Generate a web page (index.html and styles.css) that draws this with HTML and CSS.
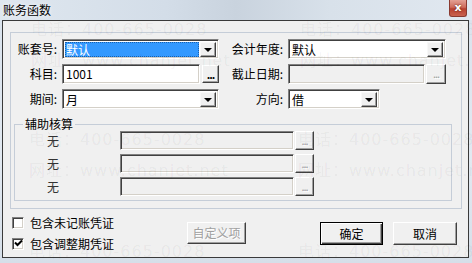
FILE: index.html
```
<!DOCTYPE html>
<html lang="zh-CN">
  <head>
    <meta charset="UTF-8" />
    <title>账务函数</title>
    <link rel="stylesheet" href="styles.css">
  </head>
  <body>
    <div class="window">
      <div class="titlebar">
        <span class="title">账务函数</span>
        <span class="close">x</span>
      </div>
      <div class="client">
        <div class="panel">
          <div class="form">
            <label class="lbl">账套号:</label>
            <div class="combo"><span class="value selected">默认</span><span class="drop"><i></i></span></div>
            <label class="lbl">会计年度:</label>
            <div class="combo"><span class="value">默认</span><span class="drop"><i></i></span></div>

            <label class="lbl">科目:</label>
            <div class="picker">
              <div class="edit">1001</div>
              <span class="btn dots">...</span>
            </div>
            <label class="lbl">截止日期:</label>
            <div class="picker wide">
              <div class="edit off"></div>
              <span class="btn dots off">...</span>
            </div>

            <label class="lbl">期间:</label>
            <div class="combo"><span class="value">月</span><span class="drop"><i></i></span></div>
            <label class="lbl">方向:</label>
            <div class="combo short"><span class="value">借</span><span class="drop"><i></i></span></div>
          </div>

          <fieldset class="aux">
            <legend>辅助核算</legend>
            <div class="aux-row">
              <span class="aux-lbl">无</span>
              <div class="edit off"></div>
              <span class="btn dots off">...</span>
            </div>
            <div class="aux-row">
              <span class="aux-lbl">无</span>
              <div class="edit off"></div>
              <span class="btn dots off">...</span>
            </div>
            <div class="aux-row">
              <span class="aux-lbl">无</span>
              <div class="edit off"></div>
              <span class="btn dots off">...</span>
            </div>
          </fieldset>
        </div>

        <div class="footer">
          <div class="checks">
            <div class="check"><span class="box"></span>包含未记账凭证</div>
            <div class="check">
              <span class="box">
                <svg width="9" height="9" viewBox="0 0 9 9"><path d="M1 3.5 L3.5 6 L8 1.5" fill="none" stroke="#000" stroke-width="2"/></svg>
              </span>包含调整期凭证
            </div>
          </div>
          <span class="btn push off">自定义项</span>
          <span class="btn push default">确定</span>
          <span class="btn push">取消</span>
        </div>
      </div>
    </div>

    <!-- watermark stamped over the screenshot -->
    <div class="watermark">
      <div class="mark m1">电话：400-665-0028<br>网址：www.chanjet.net</div>
      <div class="mark m2">电话：400-665-0028<br>网址：www.chanjet.net</div>
      <div class="mark m3">电话：400-665-0028<br>网址：www.chanjet.net</div>
      <div class="mark m4">电话：400-665-0028<br>网址：www.chanjet.net</div>
      <div class="mark m5">电话：400-665-0028</div>
      <div class="mark m6">电话：400-665-0028</div>
    </div>
  </body>
</html>
```

FILE: styles.css
```
/* Dialog window */
body {
  margin: 0;
  width: 472px;
  height: 263px;
  overflow: hidden;
  position: relative;
  background: #dbe4ee;
  font: 12px "Noto Sans CJK SC", "Liberation Sans", sans-serif;
  color: #000;
}

.window {
  display: flex;
  flex-direction: column;
  height: 263px;
  background: linear-gradient(180deg, #d9e2ec 0%, #e2e9f1 60%, #d6dfe9 100%);
}

.titlebar {
  height: 20px;
  display: flex;
  align-items: flex-start;
  padding: 0 5px 0 3px;
  background: linear-gradient(90deg, #dfe7ef 0%, #d3dde8 35%, #c9d3de 50%, #d8e1ea 70%, #e1e8f0 100%);
}

.title {
  line-height: 19px;
  font-size: 12px;
  text-shadow: 0 0 4px #fff;
}

.close {
  margin-left: auto;
  width: 18px;
  height: 17px;
  box-sizing: border-box;
  border: 1px solid #8a3a30;
  border-top: 0;
  border-radius: 0 0 3px 3px;
  background: linear-gradient(180deg, #e3a094 0%, #cf6c5c 45%, #b8402f 55%, #c9624f 100%);
  color: #fff;
  font: bold 11px "DejaVu Sans", sans-serif;
  text-align: center;
  line-height: 15px;
  text-shadow: 0 0 2px #4a1208;
}

.client {
  margin: 0 3px 0 2px;
  height: 238px;
  box-sizing: border-box;
  border: 1px solid #3a3a3a;
  background: #f0f0f0;
  display: flex;
  flex-direction: column;
}

.panel {
  margin: 11px 6px 0 7px;
  height: 177px;
  box-sizing: border-box;
  border: 1px solid #c5cdd8;
  padding: 6px 0 0 0;
}

/* top form */
.form {
  display: grid;
  grid-template-columns: 51px 157px 69px 158px;
  grid-auto-rows: 20px;
  row-gap: 5px;
  align-items: center;
}

.lbl {
  text-align: right;
  padding-right: 5px;
  line-height: 20px;
  white-space: nowrap;
}

.combo,
.edit {
  box-sizing: border-box;
  height: 20px;
  border: 1px solid;
  border-color: #808080 #fff #fff #808080;
  box-shadow: inset 1px 1px #404040, inset -1px -1px #d4d0c8;
  background: #fff;
}

.combo {
  display: flex;
  padding: 2px 2px 1px 2px;
}

.combo.short {
  width: 92px;
}

.value {
  flex: 1;
  line-height: 15px;
  padding-left: 1px;
}

.value.selected {
  background: #3399ff;
  color: #fff;
  outline: 1px dotted #1a5faa;
  outline-offset: -1px;
}

.drop {
  width: 16px;
  box-sizing: border-box;
  border: 1px solid;
  border-color: #f8f8f8 #404040 #404040 #f8f8f8;
  box-shadow: inset -1px -1px #a0a0a0;
  background: #f0f0f0;
  display: flex;
  align-items: center;
  justify-content: center;
  margin-left: 1px;
}

.drop i {
  width: 0;
  height: 0;
  border-left: 4px solid transparent;
  border-right: 4px solid transparent;
  border-top: 4px solid #000;
  margin-top: 1px;
}

.picker {
  display: flex;
  gap: 2px;
  align-items: center;
}

.picker .edit {
  flex: 1;
}

.picker.wide {
  gap: 1px;
  width: 158px;
}

.picker.wide .btn {
  width: 20px;
  height: 20px;
}

.edit {
  padding: 0 3px;
  line-height: 18px;
}

.edit.off {
  background: #f0f0f0;
}

/* raised buttons */
.btn {
  box-sizing: border-box;
  border: 1px solid;
  border-color: #fff #404040 #404040 #fff;
  box-shadow: inset -1px -1px #a0a0a0;
  background: #f0f0f0;
  text-align: center;
}

.dots {
  width: 17px;
  height: 18px;
  line-height: 17px;
  font-weight: bold;
  font-size: 11px;
  letter-spacing: -1px;
}

.off {
  color: #a0a0a0;
  text-shadow: 1px 1px #fff;
}

.dots.off {
  font-weight: normal;
}

/* auxiliary group */
.aux {
  margin: 8px 9px 0 3px;
  padding: 0 0 4px 0;
  border: 1px solid #c5cdd8;
  display: flex;
  flex-direction: column;
  gap: 4px;
}

.aux legend {
  margin-left: 8px;
  padding: 0 2px;
  line-height: 14px;
}

.aux-row {
  display: flex;
  align-items: center;
  height: 19px;
}

.aux-lbl {
  width: 105px;
  padding-left: 32px;
  box-sizing: border-box;
  color: #333;
}

.aux-row .edit {
  width: 174px;
  height: 19px;
}

.aux-row .btn {
  width: 19px;
  height: 19px;
  margin-left: 1px;
}

/* footer */
.footer {
  display: flex;
  align-items: flex-start;
  padding: 3px 11px 0 9px;
}

.checks {
  width: 175px;
  display: flex;
  flex-direction: column;
}

.check {
  height: 21px;
  display: flex;
  align-items: center;
  gap: 6px;
  white-space: nowrap;
}

.box {
  width: 12px;
  height: 12px;
  box-sizing: border-box;
  border: 1px solid;
  border-color: #808080 #fff #fff #808080;
  box-shadow: inset 1px 1px #404040, inset -1px -1px #d4d0c8;
  background: #fff;
  display: flex;
  align-items: center;
  justify-content: center;
}

.push {
  margin-top: 10px;
  height: 23px;
  line-height: 21px;
  width: 64px;
}

.push.off {
  width: 59px;
  height: 22px;
  line-height: 20px;
  margin-right: auto;
}

.push.default {
  width: 63px;
  margin-right: 10px;
  border-color: #000;
  box-shadow: inset 1px 1px #fff, inset -1px -1px #404040, inset -2px -2px #a0a0a0;
}

/* watermark */
.watermark {
  position: absolute;
  inset: 0;
  pointer-events: none;
}

.mark {
  position: absolute;
  color: rgba(0, 0, 0, 0.055);
  font: 16px "DejaVu Sans", "Noto Sans CJK SC", sans-serif;
  line-height: 31px;
  letter-spacing: 1px;
  white-space: nowrap;
}

.m1 { left: 31px; top: 14px; }
.m2 { left: 300px; top: 14px; }
.m3 { left: 29px; top: 124px; }
.m4 { left: 298px; top: 124px; }
.m5 { left: 29px; top: 236px; }
.m6 { left: 298px; top: 236px; }
```
